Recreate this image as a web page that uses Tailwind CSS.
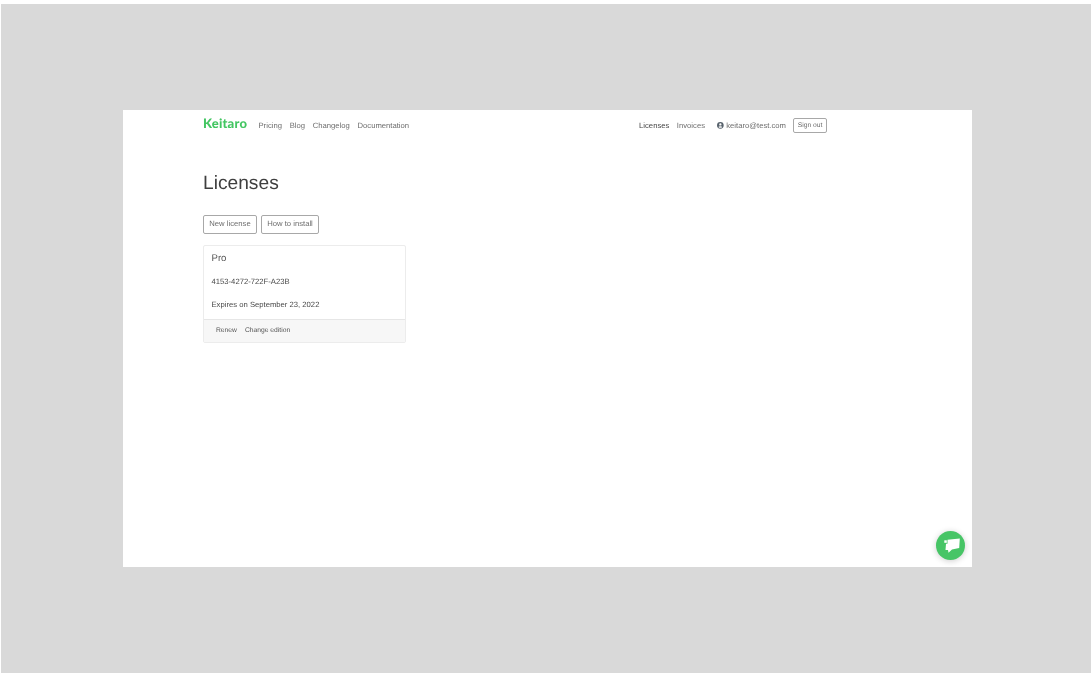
<!DOCTYPE html>
<html>
<head>
<meta charset="utf-8">
<script src="https://cdn.jsdelivr.net/npm/@tailwindcss/browser@4"></script>
</head>
<body class="bg-white font-['Liberation_Sans',Arial,sans-serif] [text-rendering:geometricPrecision]">
<div class="w-[1091px] h-[674px] overflow-hidden pt-[4px] pl-px pb-px">
  <div class="w-[1090px] h-[669px] bg-[#d9d9d9] pt-[106px] pl-[122px]">
    <main class="relative w-[849px] h-[457px] bg-white text-[#555] px-[80px] blur-[0.35px]">
      <nav class="flex items-center h-[30px] pt-px w-[624px] text-[7.680px] text-[#6d6d6d]">
        <span class="text-[#43c662] text-[13px] font-black tracking-[0.2px] w-[55.500px] -mt-[4px] font-['Lato',sans-serif]">Keitaro</span>
        <span class="mr-[7.700px]">Pricing</span>
        <span class="mr-[7.700px]">Blog</span>
        <span class="mr-[7.700px]">Changelog</span>
        <span>Documentation</span>
        <span class="ml-auto mr-[7.500px] text-[#444]">Licenses</span>
        <span class="mr-[12px]">Invoices</span>
        <svg class="w-[6.700px] h-[6.700px] mr-[2.500px]" viewBox="0 0 16 16" fill="#56616b"><path fill-rule="evenodd" d="M8 0a8 8 0 1 0 0 16A8 8 0 0 0 8 0Zm0 3a2.800 2.800 0 1 1 0 5.600A2.800 2.800 0 0 1 8 3Zm0 11a6 6 0 0 1-4.600-2.200C4 10.500 6 10 8 10s4 .5 4.600 1.800A6 6 0 0 1 8 14Z"/></svg>
        <span class="mr-[7px]">keitaro@test.com</span>
        <span class="flex items-center justify-center w-[34px] h-[15px] pt-px border border-[#a8a8a8] rounded-[2px] text-[6.720px]">Sign out</span>
      </nav>
      <h1 class="mt-[32px] text-[19.200px] leading-[24px] text-[#3f3f3f]">Licenses</h1>
      <div class="flex gap-[4px] mt-[19px] text-[7.680px] text-[#6d6d6d]">
        <span class="flex items-center justify-center w-[54px] h-[19px] pb-px border border-[#a8a8a8] rounded-[2px]">New license</span>
        <span class="flex items-center justify-center w-[58px] h-[19px] pb-px border border-[#a8a8a8] rounded-[2px]">How to install</span>
      </div>
      <section class="mt-[11px] w-[203px] h-[98px] border border-[#ececec] rounded-[2px] flex flex-col text-[7.680px] text-[#4a4a4a]">
        <div class="flex-1 px-[7.500px]">
          <h2 class="mt-[7px] text-[9.600px] leading-[12px] text-[#555]">Pro</h2>
          <p class="mt-[12px] leading-[10px]">4153-4272-722F-A23B</p>
          <p class="mt-[13px] leading-[10px]">Expires on September 23, 2022</p>
        </div>
        <div class="h-[23px] flex items-center gap-[8px] px-[12px] bg-[#f7f7f7] border-t border-[#e6e6e6] text-[6.720px] text-[#555]">
          <span>Renew</span><span>Change edition</span>
        </div>
      </section>
      <div class="absolute right-[7px] bottom-[7px] w-[29px] h-[29px] rounded-full bg-[#47c566] shadow-[0_1px_6px_rgba(0,0,0,0.2)] flex items-center justify-center">
        <svg class="w-[18px] h-[15px]" viewBox="0 0 18 15" fill="#fff"><path d="M5.500 1.800 17.800 .5 17.200 10 10 11.500 6.500 14.800 6 12 3.500 12 4 5.700 5.500 5.700Z"/><rect x="2.300" y="2.300" width="2.500" height="2.500"/></svg>
      </div>
    </main>
  </div>
</div>
</body>
</html>
